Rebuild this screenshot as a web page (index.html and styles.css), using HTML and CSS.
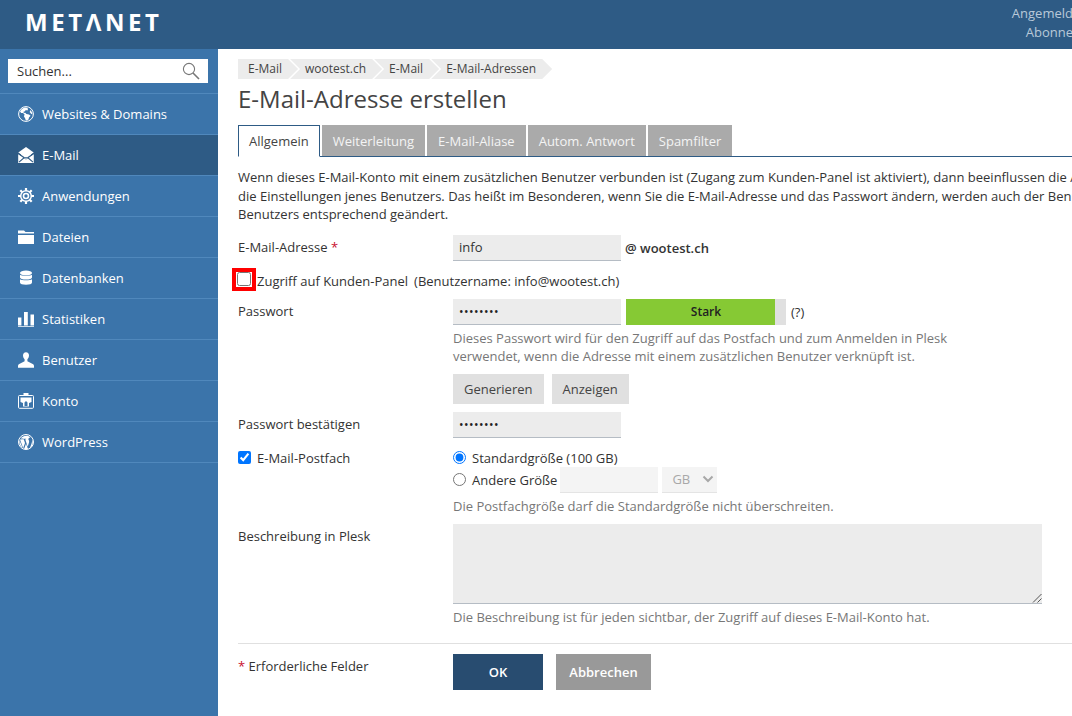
FILE: index.html
```html
<!DOCTYPE html>
<html lang="de">
<head>
<meta charset="utf-8">
<title>E-Mail-Adresse erstellen</title>
<link rel="stylesheet" href="styles.css">
</head>
<body>
<div class="page">
<header class="topbar">
  <div class="logo">METΛNET</div>
  <div class="user"><div>Angemeldet als</div><div>Abonnement</div></div>
</header>
<div class="body">
<aside class="sidebar">
  <div class="searchwrap">
    <div class="search"><span>Suchen...</span>
      <svg class="mag" viewBox="0 0 18 18" width="18" height="18"><circle cx="7" cy="7" r="5.6" fill="none" stroke="#777" stroke-width="1.1"/><path d="M11 11l6 6" stroke="#777" stroke-width="1.6" fill="none"/></svg>
    </div>
  </div>
  <nav class="nav">
    <a class="item"><svg viewBox="0 0 16 16"><circle cx="8" cy="8" r="7.4" fill="none" stroke="#fff" stroke-width="1"/><path fill="#fff" d="M8 1.500C5 1.600 3 3.400 2 5.600l1.200 1.300 1.800.2 1.600 1.500-.7 1.600 1.300 2.200.5 1.800C7.500 14.500 9 14.800 10.500 13.600l.5-2.200 1.600-1.600-1.700-1.400-2.500-.3-1.200-1.300-1.400.2-.3-1.300 1.500-.4.700-1.200 1.700.3.600-1.100L9.500 2z"/><path fill="#fff" d="M12.500 4l1.500 2.500.5 2-1.500-.8-1.300-1.700z"/></svg><span>Websites &amp; Domains</span></a>
    <a class="item on"><svg viewBox="0 0 16 16"><path fill="#fff" d="M8 0L.3 5.600 4 8.300h8l3.700-2.700z"/><path fill="#fff" d="M3 4h10v5l-5 3-5-3z"/><path fill="#fff" d="M.2 7v9h15.600V7L8 12.400z"/><path fill="none" stroke="#2e5b85" stroke-width="1.100" d="M.2 6.500L6 10.500M15.800 6.500L10 10.500M1 15.200l5-4.400h4l5 4.400"/></svg><span>E-Mail</span></a>
    <a class="item"><svg viewBox="0 0 16 16"><circle cx="8" cy="8" r="2.500" fill="none" stroke="#fff" stroke-width="1.600"/><circle cx="8" cy="8" r="5.300" fill="none" stroke="#fff" stroke-width="1.500"/><path stroke="#fff" stroke-width="2.200" fill="none" d="M8 0v2.800M8 13.200V16M0 8h2.800M13.200 8H16M2.300 2.300l2 2M11.700 11.700l2 2M13.700 2.300l-2 2M4.300 11.700l-2 2"/></svg><span>Anwendungen</span></a>
    <a class="item"><svg viewBox="0 0 16 16"><path fill="#fff" d="M0 1.500h6l1.500 1.500H16v1.500H0z"/><path fill="#fff" d="M0 6h16v9H0z"/></svg><span>Dateien</span></a>
    <a class="item"><svg viewBox="0 0 16 16"><ellipse cx="8" cy="3" rx="6" ry="2.400" fill="#fff"/><path fill="#fff" d="M2 4.800c1.500 1.500 10.500 1.500 12 0v2.600c0 1.200-2.500 2.200-6 2.200s-6-1-6-2.200z"/><path fill="#fff" d="M2 9.200c1.500 1.500 10.500 1.500 12 0v3.300c0 1.300-2.500 2.300-6 2.300s-6-1-6-2.300z"/></svg><span>Datenbanken</span></a>
    <a class="item"><svg viewBox="0 0 16 16"><path fill="#fff" d="M0 6.500h3.400v8H0zM6 1h3.800v13.500H6zM12.500 3.500H16v11h-3.500zM0 15.300h16v.9H0z"/></svg><span>Statistiken</span></a>
    <a class="item"><svg viewBox="0 0 16 16"><path fill="#fff" d="M8 .3c-2 0-3 1.400-3 3.200 0 1.500.8 3 1.600 3.800v2L.8 12.300C.3 12.600 0 13.200 0 14v1.800h16V14c0-.8-.3-1.400-.8-1.700L9.400 9.300v-2c.8-.8 1.600-2.300 1.600-3.800C11 1.700 10 .3 8 .3z"/></svg><span>Benutzer</span></a>
    <a class="item"><svg viewBox="0 0 16 16"><path fill="#fff" d="M5.500 0h5v3h-5z"/><rect x=".5" y="2.500" width="15" height="12.800" rx="1" fill="none" stroke="#fff"/><path fill="#fff" fill-rule="evenodd" d="M2.500 4.500h11V9l-2.500 1v3.500H5V10L2.500 9zM6.500 13V9.500L8 8l1.500 1.500V13z"/></svg><span>Konto</span></a>
    <a class="item"><svg viewBox="0 0 16 16"><circle cx="8" cy="8" r="7.500" fill="none" stroke="#fff"/><path fill="#fff" d="M2 5.500l3.200 8.700L7 9 5.700 5.300H4.800V4.700h3.300v.6h-.9l2.500 7.400 1.300-4.300c.4-1.400-.1-2.100-.6-3V4.700c.5-.8 1.200-1.300 2-1.200C10.700 1 5 1 2.800 4.600h2v.7z"/><path fill="#fff" d="M8 9.800l-1.900 5.100c1.200.4 2.600.4 3.900 0zM14 5.200c.3 1.800 0 3.200-.6 4.700l-1.700 4.600c2.700-1.500 4-5.900 2.300-9.300zM1.500 6.300C.9 8.800 2 12.600 4.600 14.100z"/></svg><span>WordPress</span></a>
  </nav>
</aside>
<main class="main">
  <ol class="crumbs">
    <li>E-Mail</li><li>wootest.ch</li><li>E-Mail</li><li>E-Mail-Adressen</li>
  </ol>
  <h1>E-Mail-Adresse erstellen</h1>
  <div class="tabs">
    <a class="tab active">Allgemein</a><a class="tab">Weiterleitung</a><a class="tab">E-Mail-Aliase</a><a class="tab">Autom. Antwort</a><a class="tab">Spamfilter</a>
  </div>
  <p class="intro">Wenn dieses E-Mail-Konto mit einem zusätzlichen Benutzer verbunden ist (Zugang zum Kunden-Panel ist aktiviert), dann beeinflussen die Änderungen<br>die Einstellungen jenes Benutzers. Das heißt im Besonderen, wenn Sie die E-Mail-Adresse und das Passwort ändern, werden auch der Benutzername und das<br>Benutzers entsprechend geändert.</p>

  <div class="row r-mail">
    <label class="lab">E-Mail-Adresse <span class="req">*</span></label>
    <div class="field"><div class="inp">info</div><b class="domain">@ wootest.ch</b></div>
  </div>
  <div class="panel">
    <span class="mark"><input type="checkbox"></span>
    <span class="panel-a">Zugriff auf Kunden-Panel</span>
    <span class="panel-b">(Benutzername: info@wootest.ch)</span>
  </div>
  <div class="row r-pass">
    <label class="lab">Passwort</label>
    <div>
      <div class="field">
        <div class="inp dots">••••••••</div>
        <div class="meter">Stark</div>
        <span class="qm">(?)</span>
      </div>
      <div class="hint h2">Dieses Passwort wird für den Zugriff auf das Postfach und zum Anmelden in Plesk<br>verwendet, wenn die Adresse mit einem zusätzlichen Benutzer verknüpft ist.</div>
      <div class="btns"><a class="btn">Generieren</a><a class="btn">Anzeigen</a></div>
    </div>
  </div>
  <div class="row r-conf">
    <label class="lab">Passwort bestätigen</label>
    <div class="field"><div class="inp dots">••••••••</div></div>
  </div>
  <div class="row r-box">
    <label class="lab chk"><input type="checkbox" checked><span>E-Mail-Postfach</span></label>
    <div>
      <label class="radio"><input type="radio" name="s" checked><span>Standardgröße (100 GB)</span></label>
      <div class="radio r2">
        <input type="radio" name="s"><span>Andere Größe</span>
        <div class="inp small"></div>
        <div class="unit">GB<svg viewBox="0 0 12 8" width="12" height="8"><path d="M1.500 1.500L6 6l4.500-4.500" fill="none" stroke="#a8a8a8" stroke-width="2"/></svg></div>
      </div>
      <div class="hint h3">Die Postfachgröße darf die Standardgröße nicht überschreiten.</div>
    </div>
  </div>
  <div class="row r-desc">
    <label class="lab">Beschreibung in Plesk</label>
    <div>
      <div class="area"><svg viewBox="0 0 10 10" width="10" height="10"><path d="M9.500 1L1 9.500M9.500 5.500L5.500 9.500" stroke="#555" fill="none"/></svg></div>
      <div class="hint h4">Die Beschreibung ist für jeden sichtbar, der Zugriff auf dieses E-Mail-Konto hat.</div>
    </div>
  </div>
  <div class="foot">
    <div class="lab foot-lab"><span class="req">*</span> Erforderliche Felder</div>
    <div class="foot-btns"><a class="ok">OK</a><a class="cancel">Abbrechen</a></div>
  </div>
</main>
</div>
</div>
</body>
</html>
```
FILE: styles.css
```css
* { box-sizing: border-box; }
html, body { margin: 0; height: 100%; overflow: hidden; background: #fff; }
body { font-family: "Open Sans", sans-serif; font-size: 13px; color: #333; }
.page { width: 1072px; height: 716px; overflow: hidden; display: flex; flex-direction: column; }
.topbar { flex: none; height: 49px; width: 1105px; background: #2e5b85; display: flex; justify-content: space-between; padding-left: 25px; }
.logo { font-size: 24px; font-weight: 700; letter-spacing: 3.600px; color: #fff; line-height: 43px; }
.user { color: #b9c9d9; text-align: right; line-height: 19px; padding-top: 4px; }
.body { flex: 1; display: flex; min-height: 0; }
.sidebar { flex: none; width: 218px; background: #3b74aa; }
.searchwrap { padding: 10px 10px 10px 8px; height: 44px; }
.search { height: 24px; background: #fff; display: flex; align-items: center; justify-content: space-between; padding: 0 8px 0 9px; color: #333; }
.mag { display: block; }
.nav { border-top: 1px solid #5088bc; }
.item { height: 41px; display: flex; align-items: center; gap: 8px; padding-left: 18px; color: #fff; border-bottom: 1px solid #5088bc; }
.item svg { width: 16px; height: 16px; flex: none; }
.item.on { background: #2e5b85; }
.main { flex: none; width: 854px; padding: 10px 0 0 20px; overflow: hidden; }
.crumbs { list-style: none; margin: 0; padding: 0; display: flex; font-size: 12px; height: 20px; }
.crumbs li { background: #ececec; color: #444; line-height: 20px; padding: 0 16px 0 15px; margin-right: -8px; clip-path: polygon(0 0, calc(100% - 10px) 0, 100% 50%, calc(100% - 10px) 100%, 0 100%, 10px 50%); white-space: nowrap; }
.crumbs li:first-child { padding-left: 10px; clip-path: polygon(0 0, calc(100% - 10px) 0, 100% 50%, calc(100% - 10px) 100%, 0 100%); }
h1 { margin: 5px 0 0; font-size: 24px; font-weight: 400; line-height: 30px; color: #444; }
.tabs { display: flex; gap: 2px; margin-top: 11px; height: 32px; width: 900px; border-bottom: 1px solid #2e5b85; }
.tab { height: 31px; padding: 0 11px; line-height: 32px; background: #aaa; color: #f4f4f4; }
.tab.active { background: #fff; color: #444; height: 32px; padding: 0 10px; border: 1px solid #2e5b85; border-bottom: 1px solid #fff; line-height: 30px; }
.intro { margin: 11px 0 0; line-height: 18.500px; white-space: nowrap; color: #333; }
.row { display: grid; grid-template-columns: 215px 1fr; width: 860px; }
.lab { color: #333; line-height: 20px; }
.req { color: #c8102e; }
.field { display: flex; align-items: center; }
.inp { width: 168px; height: 26px; background: #ececec; border-bottom: 1px solid #b5bcc4; line-height: 25px; padding-left: 6px; color: #333; }
.dots { font-size: 12px; letter-spacing: .5px; color: #222; }
.domain { margin-left: 4px; font-weight: 600; color: #333; }
.r-mail { margin-top: 11px; }
.r-mail .lab { line-height: 24px; }
.panel { display: flex; align-items: center; height: 23px; margin: 7px 0 0 -6px; color: #333; }
.mark { width: 24px; height: 23px; border: 4px solid #f00; display: flex; align-items: center; justify-content: center; }
.mark input { margin: 0; width: 14px; height: 14px; flex: none; }
.panel-a { margin-left: 1px; padding-top: 3px; }
.panel-b { margin-left: 6px; padding-top: 3px; }
.r-pass { margin-top: 8px; }
.r-pass .lab { line-height: 24px; }
.meter { width: 160px; height: 26px; margin-left: 5px; background: linear-gradient(to right, #86c934 149px, #e0e0e0 149px); color: #222; text-align: center; line-height: 25px; font-size: 12px; font-weight: 600; }
.qm { margin-left: 5px; }
.hint { color: #777; line-height: 18px; }
.h2 { margin-top: 4px; }
.btns { display: flex; gap: 8px; margin-top: 9px; }
.btn { height: 30px; padding: 0 11px; background: #e0e0e0; line-height: 30px; color: #444; }
.r-conf { margin-top: 8px; }
.r-conf .lab { line-height: 24px; }
.r-box { margin-top: 10px; }
.chk { display: flex; align-items: center; gap: 6px; height: 20px; }
.chk input, .radio input { margin: 0; width: 13px; height: 13px; }
.radio { display: flex; align-items: center; gap: 6px; height: 20px; color: #333; }
.r2 { height: 26px; margin-top: -1px; }
.small { width: 98px; background: #f4f4f4; margin-left: -3px; border-bottom: 1px solid #e4e4e4; }
.unit { width: 55px; height: 26px; margin-left: -2px; background: #f4f4f4; border-bottom: 1px solid #e4e4e4; color: #a8a8a8; display: flex; align-items: center; justify-content: space-between; padding: 0 3px 0 10px; }
.h3 { margin-top: 4px; }
.r-desc { margin-top: 9px; }
.r-desc .lab { line-height: 24px; }
.area { width: 589px; height: 80px; background: #ececec; border-bottom: 1px solid #b5bcc4; display: flex; align-items: flex-end; justify-content: flex-end; }
.area svg { display: block; }
.h4 { margin-top: 4px; }
.foot { display: grid; grid-template-columns: 215px 1fr; width: 860px; margin-top: 17px; border-top: 1px solid #e0e0e0; padding-top: 10px; }
.foot-lab { padding-top: 2px; }
.foot-btns { display: flex; gap: 13px; }
.ok, .cancel { height: 36px; line-height: 36px; text-align: center; font-weight: 600; color: #fff; }
.ok { width: 90px; background: #284c70; }
.cancel { width: 95px; background: #999; }
```
